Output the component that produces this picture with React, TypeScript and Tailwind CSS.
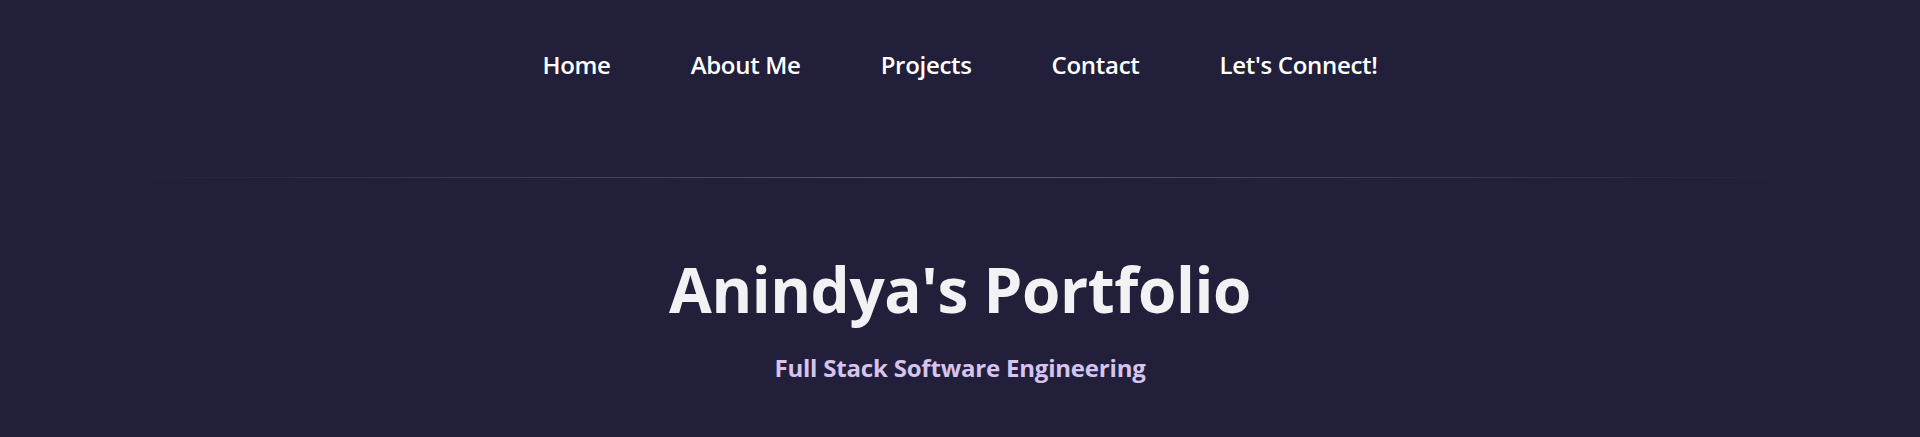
export default function App() {
  const links = ["Home", "About Me", "Projects", "Contact", "Let's Connect!"];
  return (
    <div className="min-h-[437px] w-full bg-[#211f3a] font-['Open_Sans',sans-serif] overflow-hidden">
      <nav className="flex h-[130px] items-center justify-center gap-[80px]">
        {links.map((l) => (
          <a key={l} href="#" className="text-[24px] font-semibold leading-none tracking-[-0.3px] text-white">
            {l}
          </a>
        ))}
      </nav>
      <div className="mx-[120px] mt-[47px] h-px bg-gradient-to-r from-transparent via-[#5d5b72] to-transparent" />
      <h1 className="mt-[80px] text-center text-[62px] font-bold leading-none tracking-[-0.4px] text-[#f2f2f4]">
        Anindya's Portfolio
      </h1>
      <p className="mt-[36px] text-center text-[24px] font-bold leading-none tracking-[-0.2px] text-[#d6c4ee]">
        Full Stack Software Engineering
      </p>
    </div>
  );
}
